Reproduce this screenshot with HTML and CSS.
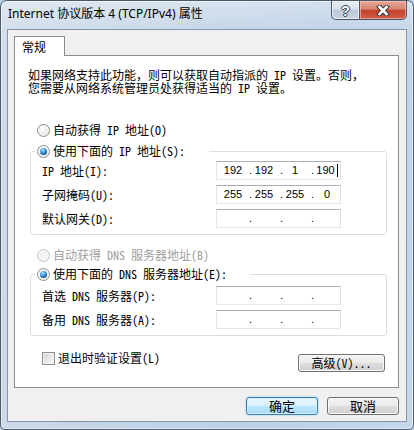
FILE: index.html
```html
<!DOCTYPE html>
<html lang="zh-CN">
<head>
<meta charset="utf-8">
<title>Internet 协议版本 4 (TCP/IPv4) 属性</title>
<link rel="stylesheet" href="styles.css">
</head>
<body>
<div class="window">
  <div class="titlebar">
    <div class="title">Internet 协议版本 4 (TCP/IPv4) 属性</div>
    <div class="caption-btns">
      <div class="cap-btn help"><span class="help-glyph">?</span></div>
      <div class="cap-btn close">
        <svg width="14" height="11" viewBox="0 0 14 11">
          <path d="M3.5 2 L10.5 9 M10.5 2 L3.5 9" stroke="#3b3b3b" stroke-width="4.6" stroke-linecap="square" fill="none"/>
          <path d="M3.5 2 L10.5 9 M10.5 2 L3.5 9" stroke="#ffffff" stroke-width="2.6" stroke-linecap="square" fill="none"/>
        </svg>
      </div>
    </div>
  </div>
  <div class="client">
    <div class="tabs"><div class="tab">常规</div></div>
    <div class="panel">
      <div class="desc">
        <div class="desc-line">如果网络支持此功能，则可以获取自动指派的 IP 设置。否则，</div>
        <div class="desc-line">您需要从网络系统管理员处获得适当的 IP 设置。</div>
      </div>

      <div class="opt first"><span class="radio"></span><span class="opt-text">自动获得 IP 地址(O)</span></div>
      <fieldset class="group g-ip">
        <legend class="legend-ip"><span class="opt"><span class="radio on"></span><span class="opt-text">使用下面的 IP 地址(S):</span></span></legend>
        <div class="rows">
          <span class="lbl">IP 地址(I):</span>
          <div class="ipfield"><span class="seg">192</span><span class="dot">.</span><span class="seg">192</span><span class="dot">.</span><span class="seg">1</span><span class="dot">.</span><span class="seg last">190<span class="caret"></span></span></div>
          <span class="lbl">子网掩码(U):</span>
          <div class="ipfield"><span class="seg">255</span><span class="dot">.</span><span class="seg">255</span><span class="dot">.</span><span class="seg">255</span><span class="dot">.</span><span class="seg last">0</span></div>
          <span class="lbl">默认网关(D):</span>
          <div class="ipfield"><span class="seg"></span><span class="dot">.</span><span class="seg"></span><span class="dot">.</span><span class="seg"></span><span class="dot">.</span><span class="seg last"></span></div>
        </div>
      </fieldset>

      <div class="opt second disabled"><span class="radio"></span><span class="opt-text">自动获得 DNS 服务器地址(B)</span></div>
      <fieldset class="group g-dns">
        <legend class="legend-dns"><span class="opt"><span class="radio on"></span><span class="opt-text">使用下面的 DNS 服务器地址(E):</span></span></legend>
        <div class="rows">
          <span class="lbl">首选 DNS 服务器(P):</span>
          <div class="ipfield"><span class="seg"></span><span class="dot">.</span><span class="seg"></span><span class="dot">.</span><span class="seg"></span><span class="dot">.</span><span class="seg last"></span></div>
          <span class="lbl">备用 DNS 服务器(A):</span>
          <div class="ipfield"><span class="seg"></span><span class="dot">.</span><span class="seg"></span><span class="dot">.</span><span class="seg"></span><span class="dot">.</span><span class="seg last"></span></div>
        </div>
      </fieldset>

      <div class="bottom-row">
        <div class="check-opt"><span class="checkbox"></span><span class="opt-text">退出时验证设置(L)</span></div>
        <button class="btn advanced">高级(V)...</button>
      </div>
    </div>
    <div class="dialog-btns">
      <button class="btn default">确定</button>
      <button class="btn">取消</button>
    </div>
  </div>
</div>
</body>
</html>
```

FILE: styles.css
```css
html, body {
  margin: 0;
  padding: 0;
}

body {
  width: 414px;
  height: 430px;
  overflow: hidden;
  background: #b9cde4;
}

.window {
  box-sizing: border-box;
  width: 414px;
  height: 430px;
  border: 1px solid #4d5968;
  border-radius: 7px 7px 5px 5px;
  padding: 0 6px 7px 6px;
  display: flex;
  flex-direction: column;
  background:
    linear-gradient(180deg, rgba(255,255,255,0.35) 0px, rgba(255,255,255,0.1) 28px, rgba(255,255,255,0) 60px),
    linear-gradient(100deg, #cfdcea 0%, #c3d4e7 40%, #bcd0e6 70%, #c6d7ea 100%);
  box-shadow: inset 0 0 0 1px rgba(255,255,255,0.55);
}

.titlebar {
  height: 28px;
  flex: none;
  display: flex;
  justify-content: space-between;
  align-items: flex-start;
}

.title {
  margin: 5px 0 0 1px;
  font: 12px/16px "Noto Sans", "Noto Sans CJK SC", sans-serif;
  color: #000;
  white-space: nowrap;
}

.caption-btns {
  display: flex;
  margin-top: -1px;
}

.cap-btn {
  box-sizing: border-box;
  height: 20px;
  border: 1px solid #4a5666;
  display: flex;
  align-items: center;
  justify-content: center;
}

.help {
  width: 28px;
  border-right: none;
  border-radius: 0 0 0 5px;
  background: linear-gradient(180deg, #e6ecf3 0%, #d8e1eb 45%, #bac8d7 52%, #c9d6e3 100%);
  box-shadow: inset 0 0 0 1px rgba(255,255,255,0.6);
}

.help-glyph {
  font: bold 14px/14px "Liberation Sans", sans-serif;
  color: #fff;
  text-shadow: 0 0 1px #2d3540, 1px 0 0 #3c4653, -1px 0 0 #3c4653, 0 1px 0 #3c4653, 0 -1px 0 #3c4653;
  margin-top: 1px;
}

.close {
  width: 48px;
  border-radius: 0 0 5px 0;
  background: linear-gradient(180deg, #e8a798 0%, #d98471 45%, #c2412c 52%, #cf5f48 100%);
  box-shadow: inset 0 0 0 1px rgba(255,210,200,0.55);
}

.client {
  flex: 1;
  box-sizing: border-box;
  border: 1px solid #8594a8;
  background: #f0f0f0;
  display: flex;
  flex-direction: column;
  font-family: "Noto Sans Mono CJK SC", "Noto Sans CJK SC", sans-serif;
  font-size: 12px;
  color: #000;
}

.tabs {
  display: flex;
  padding: 6px 0 0 6px;
}

.tab {
  box-sizing: border-box;
  width: 51px;
  height: 20px;
  border: 1px solid #898c95;
  border-bottom: none;
  background: #fff;
  margin-bottom: -1px;
  position: relative;
  z-index: 1;
  padding-left: 7px;
  font: 12px/19px "Noto Sans CJK SC", sans-serif;
}

.panel {
  box-sizing: border-box;
  height: 333px;
  margin: 0 7px 0 6px;
  border: 1px solid #898c95;
  background: #fff;
  display: flex;
  flex-direction: column;
  align-items: flex-start;
}

.desc {
  margin: 12px 0 0 13px;
  white-space: nowrap;
}

.desc-line {
  height: 13px;
  line-height: 13px;
}

.opt {
  display: flex;
  align-items: center;
  gap: 3px;
  height: 16px;
  line-height: 16px;
  white-space: nowrap;
}

.opt.first {
  margin: 28px 0 0 22px;
}

.opt.second {
  margin: 12px 0 0 22px;
}

.opt.disabled {
  color: #a0a0a0;
}

.radio {
  box-sizing: border-box;
  width: 13px;
  height: 13px;
  border-radius: 50%;
  border: 1px solid #8e8f8f;
  background: radial-gradient(circle at 40% 35%, #ffffff 0%, #f0f0f0 45%, #d4d4d4 100%);
  box-shadow: inset 0 0 0 1px #f6f6f6;
  display: flex;
  align-items: center;
  justify-content: center;
  flex: none;
}

.disabled .radio {
  border-color: #c4c4c4;
  background: #f4f4f4;
}

.radio.on::after {
  content: "";
  width: 7px;
  height: 7px;
  border-radius: 50%;
  background: radial-gradient(circle at 40% 30%, #b6e3ff 0%, #4aa3e6 35%, #1a5e9e 70%, #0c3566 100%);
}

.group {
  box-sizing: border-box;
  width: 357px;
  margin: 5px 0 0 15px;
  border: 1px solid #d5dfe5;
  border-radius: 3px;
  padding: 2px 45px 6px 11px;
  min-width: 0;
}

.g-dns {
  margin-top: 3px;
  padding-top: 4px;
}

legend {
  padding: 0 0 0 2px;
  margin-left: -7px;
  box-sizing: border-box;
}

.legend-ip {
  width: 174px;
}

.legend-dns {
  width: 215px;
}

.rows {
  display: grid;
  grid-template-columns: 1fr 125px;
  row-gap: 5px;
  align-items: center;
}

.lbl {
  white-space: nowrap;
  line-height: 16px;
}

.ipfield {
  box-sizing: border-box;
  height: 19px;
  border: 1px solid;
  border-color: #abadb3 #dbdfe6 #e3e9ef #e2e3ea;
  background: #fff;
  display: flex;
  align-items: center;
  padding-left: 5px;
  font: 11px/17px "Liberation Sans", sans-serif;
  color: #000;
}

.seg {
  width: 26px;
  box-sizing: border-box;
  padding-right: 4px;
  text-align: center;
  display: flex;
  justify-content: center;
  align-items: center;
}

.seg.last {
  width: 24px;
  padding-right: 0;
}

.dot {
  width: 5px;
  text-align: center;
}

.caret {
  display: inline-block;
  width: 1px;
  height: 13px;
  background: #000;
  margin-left: 2px;
}

.bottom-row {
  display: flex;
  align-items: flex-start;
  align-self: stretch;
  margin-top: 14px;
}

.check-opt {
  display: flex;
  align-items: center;
  gap: 3px;
  height: 16px;
  line-height: 16px;
  margin-left: 27px;
  white-space: nowrap;
}

.checkbox {
  box-sizing: border-box;
  width: 13px;
  height: 13px;
  border: 1px solid #8f8f8f;
  background: linear-gradient(135deg, #d2d2d2 0%, #e6e6e6 50%, #fafafa 100%);
  box-shadow: inset 0 0 0 1px #f4f4f4;
  flex: none;
}

.btn {
  box-sizing: border-box;
  height: 18px;
  padding: 0;
  border: 1px solid #707070;
  border-radius: 3px;
  background: linear-gradient(180deg, #f3f3f3 0%, #ebebeb 48%, #dddddd 52%, #cfcfcf 100%);
  box-shadow: inset 0 0 0 1px #fbfbfb;
  font: 12px/16px "Noto Sans Mono CJK SC", "Noto Sans CJK SC", sans-serif;
  color: #000;
}

.advanced {
  width: 87px;
  margin: 4px 13px 0 auto;
}

.dialog-btns {
  display: flex;
  justify-content: flex-end;
  gap: 9px;
  margin: 9px 7px 0 0;
}

.dialog-btns .btn {
  width: 72px;
  font-size: 13px;
}

.btn.default {
  border-color: #3c7fb1;
  background: linear-gradient(180deg, #eaf6fd 0%, #d9f0fc 48%, #bee6fd 52%, #a7d9f5 100%);
  box-shadow: inset 0 0 0 1px #d4eefc, 0 0 2px 0 #7fc8f0;
}
```
